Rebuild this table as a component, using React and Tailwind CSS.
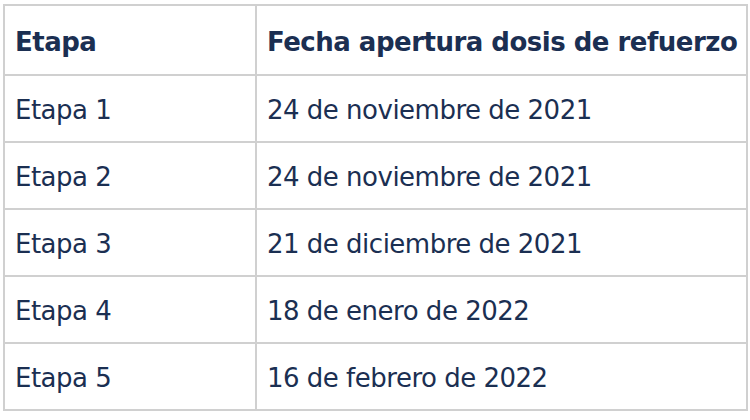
import React from 'react';

const rows = [
  ['Etapa 1', '24 de noviembre de 2021'],
  ['Etapa 2', '24 de noviembre de 2021'],
  ['Etapa 3', '21 de diciembre de 2021'],
  ['Etapa 4', '18 de enero de 2022'],
  ['Etapa 5', '16 de febrero de 2022'],
];

export default function App() {
  return (
    <div className="w-[750px] h-[420px] bg-white pl-[3px] pt-[4px] overflow-hidden">
      <table
        className="border-collapse text-[#1b2f52] text-[26px] tracking-[-0.5px]"
        style={{ fontFamily: '"DejaVu Sans", Verdana, sans-serif' }}
      >
        <thead>
          <tr className="h-[70px]">
            <th className="w-[252px] border-2 border-[#d0d0d0] pl-[10px] pt-[4px] text-left font-bold">Etapa</th>
            <th className="w-[491px] border-2 border-[#d0d0d0] pl-[10px] pt-[4px] text-left font-bold">Fecha apertura dosis de refuerzo</th>
          </tr>
        </thead>
        <tbody>
          {rows.map(([etapa, fecha]) => (
            <tr key={etapa} className="h-[67px]">
              <td className="border-2 border-[#d0d0d0] pl-[10px] pt-[4px]">{etapa}</td>
              <td className="border-2 border-[#d0d0d0] pl-[10px] pt-[4px]">{fecha}</td>
            </tr>
          ))}
        </tbody>
      </table>
    </div>
  );
}
